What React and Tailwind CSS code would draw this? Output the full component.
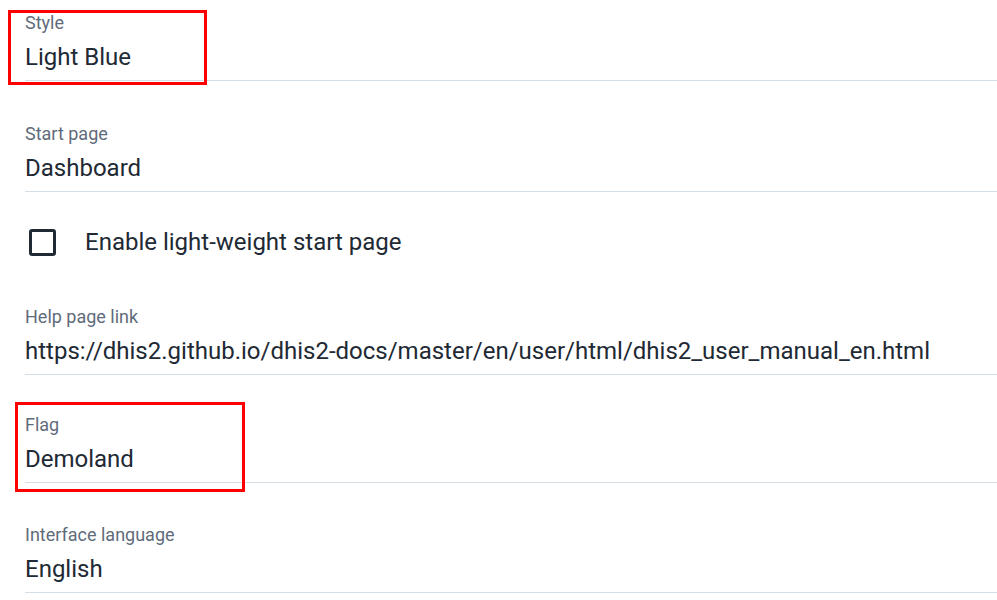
import React from "react";

const font = { fontFamily: "Roboto, 'Noto Sans', Arial, sans-serif" };

function Field({ label, value, pt }) {
  return (
    <div className={`${pt} border-b border-[#d5dde5] pb-[9px]`}>
      <div className="text-[18px] leading-[21px] text-[#5f6b7a]">{label}</div>
      <div className="mt-[10px] text-[24px] leading-[28px] text-[#212934] whitespace-nowrap">{value}</div>
    </div>
  );
}

export default function App() {
  return (
    <div className="relative w-[997px] h-[600px] bg-white overflow-hidden" style={font}>
      <div className="pl-[25px]">
        <Field pt="pt-[12px]" label="Style" value="Light Blue" />
        <Field pt="pt-[42px]" label="Start page" value="Dashboard" />
        <div className="flex items-center pt-[37px] pb-[50px] pl-[4px]">
          <div className="w-[27px] h-[27px] border-[3px] border-[#212934] rounded-[3px]" />
          <div className="ml-[29px] text-[24px] leading-[27px] text-[#212934]">Enable light-weight start page</div>
        </div>
        <Field pt="pt-0" label="Help page link" value="https://dhis2.github.io/dhis2-docs/master/en/user/html/dhis2_user_manual_en.html" />
        <Field pt="pt-[39px]" label="Flag" value="Demoland" />
        <Field pt="pt-[41px]" label="Interface language" value="English" />
      </div>
      <div className="absolute left-[8px] top-[10px] w-[199px] h-[75px] border-[3px] border-[#ff0000]" />
      <div className="absolute left-[15px] top-[402px] w-[230px] h-[90px] border-[3px] border-[#ff0000]" />
    </div>
  );
}
